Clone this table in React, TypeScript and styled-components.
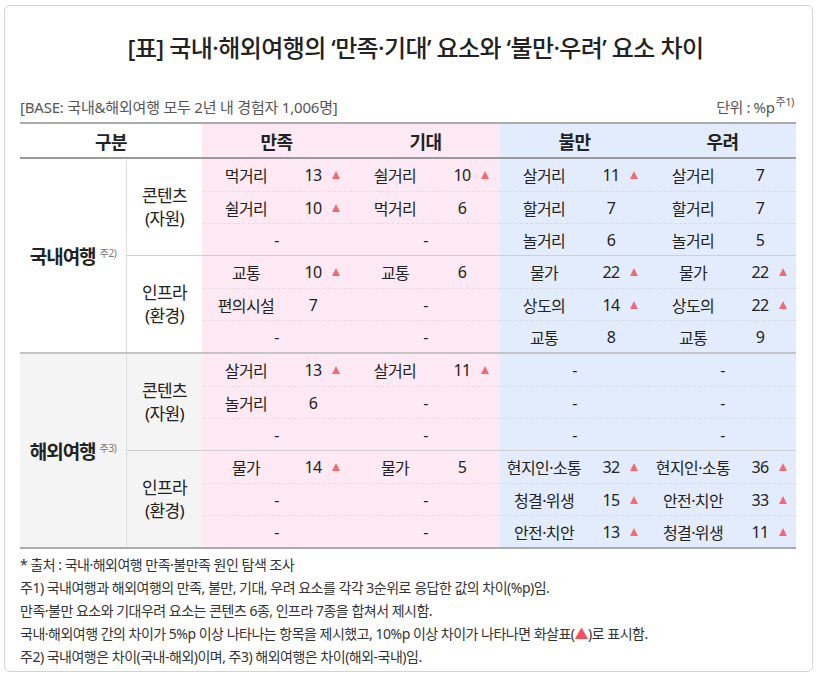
import React from "react";
import styled, { createGlobalStyle } from "styled-components";

const GlobalStyle = createGlobalStyle`
  html, body {
    margin: 0;
    padding: 0;
    background: #ffffff;
  }
  body {
    font-family: "Noto Sans", "Noto Sans CJK KR", sans-serif;
    color: #222222;
  }
`;

type Tone = "pink" | "blue";

type Item = {
  name?: string;
  value?: number;
  up?: boolean;
};

type SubGroup = {
  label: [string, string];
  rows: Item[][];
};

type Group = {
  label: string;
  note: string;
  shaded?: boolean;
  subs: SubGroup[];
};

const heads: { title: string; tone: Tone }[] = [
  { title: "만족", tone: "pink" },
  { title: "기대", tone: "pink" },
  { title: "불만", tone: "blue" },
  { title: "우려", tone: "blue" },
];

const dash: Item = {};

const groups: Group[] = [
  {
    label: "국내여행",
    note: "주2)",
    subs: [
      {
        label: ["콘텐츠", "(자원)"],
        rows: [
          [
            { name: "먹거리", value: 13, up: true },
            { name: "쉴거리", value: 10, up: true },
            { name: "살거리", value: 11, up: true },
            { name: "살거리", value: 7 },
          ],
          [
            { name: "쉴거리", value: 10, up: true },
            { name: "먹거리", value: 6 },
            { name: "할거리", value: 7 },
            { name: "할거리", value: 7 },
          ],
          [dash, dash, { name: "놀거리", value: 6 }, { name: "놀거리", value: 5 }],
        ],
      },
      {
        label: ["인프라", "(환경)"],
        rows: [
          [
            { name: "교통", value: 10, up: true },
            { name: "교통", value: 6 },
            { name: "물가", value: 22, up: true },
            { name: "물가", value: 22, up: true },
          ],
          [
            { name: "편의시설", value: 7 },
            dash,
            { name: "상도의", value: 14, up: true },
            { name: "상도의", value: 22, up: true },
          ],
          [dash, dash, { name: "교통", value: 8 }, { name: "교통", value: 9 }],
        ],
      },
    ],
  },
  {
    label: "해외여행",
    note: "주3)",
    shaded: true,
    subs: [
      {
        label: ["콘텐츠", "(자원)"],
        rows: [
          [
            { name: "살거리", value: 13, up: true },
            { name: "살거리", value: 11, up: true },
            dash,
            dash,
          ],
          [{ name: "놀거리", value: 6 }, dash, dash, dash],
          [dash, dash, dash, dash],
        ],
      },
      {
        label: ["인프라", "(환경)"],
        rows: [
          [
            { name: "물가", value: 14, up: true },
            { name: "물가", value: 5 },
            { name: "현지인·소통", value: 32, up: true },
            { name: "현지인·소통", value: 36, up: true },
          ],
          [
            dash,
            dash,
            { name: "청결·위생", value: 15, up: true },
            { name: "안전·치안", value: 33, up: true },
          ],
          [
            dash,
            dash,
            { name: "안전·치안", value: 13, up: true },
            { name: "청결·위생", value: 11, up: true },
          ],
        ],
      },
    ],
  },
];

const notes = [
  "* 출처 : 국내·해외여행 만족·불만족 원인 탐색 조사",
  "주1) 국내여행과 해외여행의 만족, 불만, 기대, 우려 요소를 각각 3순위로 응답한 값의 차이(%p)임.",
  "만족·불만 요소와 기대우려 요소는 콘텐츠 6종, 인프라 7종을 합쳐서 제시함.",
];

const toneBg = (tone: Tone) => (tone === "pink" ? "#fde9f3" : "#e3ecfc");

const Wrapper = styled.div`
  padding: 5px 5px 4px 4px;
`;

const Card = styled.div`
  box-sizing: border-box;
  height: 667px;
  border: 1px solid #d5d5d5;
  border-radius: 6px;
  padding: 0 15px;
  display: flex;
  flex-direction: column;
`;

const Title = styled.h1`
  margin: 27px 0 0;
  padding-left: 14px;
  text-align: center;
  font-size: 24px;
  line-height: 30px;
  font-weight: 500;
  letter-spacing: -0.6px;
  color: #222;
`;

const MetaRow = styled.div`
  margin-top: 34px;
  display: flex;
  justify-content: space-between;
  align-items: flex-end;
  font-size: 15px;
  line-height: 20px;
  letter-spacing: -0.2px;
  color: #555;
`;

const Unit = styled.span`
  padding-right: 3px;
  letter-spacing: -0.4px;
`;

const Sup = styled.sup`
  font-size: 11px;
  line-height: 0;
  vertical-align: 7px;
  margin-left: 1px;
`;

const Table = styled.div`
  margin-top: 5px;
  width: 776px;
  border-top: 2px solid #ababab;
  border-bottom: 2px solid #ababab;
`;

const HeadRow = styled.div`
  display: grid;
  grid-template-columns: 182px 149px 149px 149px 147px;
  height: 33px;
  border-bottom: 2px solid #9a9a9a;
`;

const HeadCell = styled.div<{ $tone?: Tone }>`
  display: flex;
  align-items: center;
  justify-content: center;
  font-size: 18px;
  font-weight: 700;
  letter-spacing: -0.6px;
  background: ${({ $tone }) => ($tone ? toneBg($tone) : "#ffffff")};
`;

const GroupBlock = styled.div<{ $shaded?: boolean }>`
  display: grid;
  grid-template-columns: 107px 1fr;
  background: ${({ $shaded }) => ($shaded ? "#f4f4f4" : "#ffffff")};
  & + & {
    border-top: 2px solid #c4c4c4;
  }
`;

const GroupLabel = styled.div`
  display: flex;
  align-items: center;
  justify-content: center;
  border-right: 1px solid #dedede;
  font-size: 19px;
  font-weight: 700;
  letter-spacing: -1px;
`;

const Note = styled.span`
  font-size: 10px;
  font-weight: 400;
  color: #777;
  letter-spacing: -0.4px;
  margin-left: 4px;
  position: relative;
  top: -3px;
`;

const SubBlock = styled.div`
  display: grid;
  grid-template-columns: 75px 1fr;
  & + & {
    border-top: 1px solid #cfcfcf;
  }
`;

const SubLabel = styled.div`
  display: flex;
  flex-direction: column;
  align-items: center;
  justify-content: center;
  font-size: 17px;
  line-height: 23px;
  letter-spacing: -0.6px;
  color: #222;
`;

const DataRow = styled.div`
  display: grid;
  grid-template-columns: 149px 149px 149px 147px;
`;

const DataCell = styled.div<{ $tone: Tone; $first: boolean }>`
  box-sizing: border-box;
  height: 32px;
  display: grid;
  grid-template-columns: 88px 46px 1fr;
  align-items: center;
  font-size: 16px;
  letter-spacing: -0.6px;
  background: ${({ $tone }) => toneBg($tone)};
  border-top: ${({ $first }) => ($first ? "none" : "1px dashed rgba(0, 0, 0, 0.07)")};
`;

const Name = styled.span`
  text-align: center;
`;

const Value = styled.span`
  text-align: center;
  font-size: 16px;
`;

const Empty = styled.span`
  grid-column: 1 / -1;
  text-align: center;
`;

const Arrow = styled.span`
  justify-self: start;
  margin-left: -4px;
  width: 0;
  height: 0;
  border-left: 4.5px solid transparent;
  border-right: 4.5px solid transparent;
  border-bottom: 8px solid #f26b74;
`;

const Notes = styled.div`
  padding-top: 4px;
  font-size: 14px;
  line-height: 23px;
  letter-spacing: -0.5px;
  color: #333;
`;

const NoteLine = styled.div``;

const RedMark = styled.span`
  color: #f0535e;
`;

const Cell = ({ item, tone, first }: { item: Item; tone: Tone; first: boolean }) => (
  <DataCell $tone={tone} $first={first}>
    {item.name ? (
      <>
        <Name>{item.name}</Name>
        <Value>{item.value}</Value>
        {item.up ? <Arrow /> : <span />}
      </>
    ) : (
      <Empty>-</Empty>
    )}
  </DataCell>
);

const App = () => {
  return (
    <Wrapper>
      <GlobalStyle />
      <Card>
        <Title>[표] 국내·해외여행의 ‘만족·기대’ 요소와 ‘불만·우려’ 요소 차이</Title>
        <MetaRow>
          <span>[BASE: 국내&amp;해외여행 모두 2년 내 경험자 1,006명]</span>
          <Unit>
            단위 : %p<Sup>주1)</Sup>
          </Unit>
        </MetaRow>
        <Table>
          <HeadRow>
            <HeadCell>구분</HeadCell>
            {heads.map((h) => (
              <HeadCell key={h.title} $tone={h.tone}>
                {h.title}
              </HeadCell>
            ))}
          </HeadRow>
          {groups.map((g) => (
            <GroupBlock key={g.label} $shaded={g.shaded}>
              <GroupLabel>
                {g.label}
                <Note>{g.note}</Note>
              </GroupLabel>
              <div>
                {g.subs.map((s, si) => (
                  <SubBlock key={si}>
                    <SubLabel>
                      <span>{s.label[0]}</span>
                      <span>{s.label[1]}</span>
                    </SubLabel>
                    <div>
                      {s.rows.map((row, ri) => (
                        <DataRow key={ri}>
                          {row.map((item, ci) => (
                            <Cell key={ci} item={item} tone={heads[ci].tone} first={ri === 0} />
                          ))}
                        </DataRow>
                      ))}
                    </div>
                  </SubBlock>
                ))}
              </div>
            </GroupBlock>
          ))}
        </Table>
        <Notes>
          {notes.map((n) => (
            <NoteLine key={n}>{n}</NoteLine>
          ))}
          <NoteLine>
            국내·해외여행 간의 차이가 5%p 이상 나타나는 항목을 제시했고, 10%p 이상 차이가 나타나면 화살표(
            <RedMark>▲</RedMark>)로 표시함.
          </NoteLine>
          <NoteLine>주2) 국내여행은 차이(국내-해외)이며, 주3) 해외여행은 차이(해외-국내)임.</NoteLine>
        </Notes>
      </Card>
    </Wrapper>
  );
};

export default App;
